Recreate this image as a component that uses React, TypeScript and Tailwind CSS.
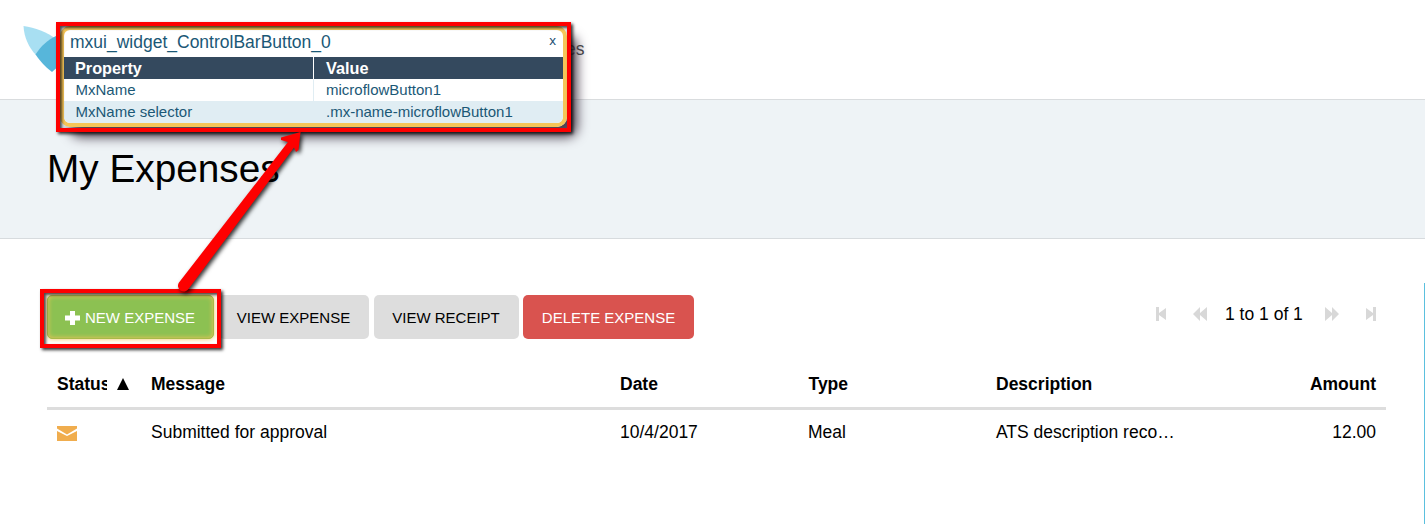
import React from "react";

const COLS = "grid grid-cols-[94px_469px_188px_188px_201px_199px]";

function Logo() {
  return (
    <svg className="ml-[23px] mt-[26px] shrink-0" width="66" height="47" viewBox="0 0 66 47">
      <path d="M0.500 0C12 1.500 24 6 33 13L38 30L13 29C6 22 1 11 0.500 0Z" fill="#a8dff2" />
      <path d="M12.500 28.500C18 20 25 13.500 33 10L47 30L29 46C22 41 17 35 12.500 28.500Z" fill="#57b6da" />
    </svg>
  );
}

function Button({ className, children }: { className: string; children: React.ReactNode }) {
  return (
    <button className={`flex h-[44px] items-center justify-center rounded-[5px] pt-[2px] text-[15px] whitespace-nowrap ${className}`}>
      {children}
    </button>
  );
}

function PagerIcon({ d, width, className }: { d: string; width: number; className: string }) {
  return (
    <svg className={`shrink-0 ${className}`} width={width} height="14" viewBox={`0 0 ${width} 14`} fill="#d8d8d8">
      <path d={d} />
    </svg>
  );
}

function Inspector() {
  return (
    <div className="absolute left-[60px] top-[26px] h-[101px] w-[507px] overflow-hidden rounded-[10px] border-4 border-[#f5c558] bg-white text-[15px] text-[#1b5876]">
      <div className="flex h-[27px] items-start justify-between px-[6px] text-[17.500px] leading-[20px]">
        <span className="pt-[2px]">mxui_widget_ControlBarButton_0</span>
        <span className="pr-px pt-px text-[13.500px] text-[#1b4f72]">x</span>
      </div>
      <div className="grid h-[22px] grid-cols-[250px_249px] bg-[#34495e] text-[16.250px] font-bold leading-[22px] text-white">
        <div className="border-r border-white pl-[11px]">Property</div>
        <div className="pl-[12px]">Value</div>
      </div>
      <div className="grid h-[22px] grid-cols-[250px_249px] leading-[22px]">
        <div className="border-r border-[#e0edf3] pl-[11.500px]">MxName</div>
        <div className="pl-[12px]">microflowButton1</div>
      </div>
      <div className="grid h-[22px] grid-cols-[250px_249px] bg-[#e0edf3] leading-[22px]">
        <div className="pl-[11.500px]">MxName selector</div>
        <div className="pl-[12px]">.mx-name-microflowButton1</div>
      </div>
    </div>
  );
}

export default function App() {
  return (
    <div className="relative flex h-[524px] w-[1425px] flex-col overflow-hidden bg-white font-['Liberation_Sans',Arial,sans-serif] text-[17.500px] text-black">
      <header className="flex h-[100px] items-start border-b border-[#d9dcde]">
        <Logo />
        <span className="ml-[477px] mt-[38px] leading-[22px] text-[#444]">es</span>
      </header>

      <section className="h-[139px] border-b border-[#d7dbde] bg-[#eef3f6] pl-[47px] pt-[47px]">
        <h1 className="text-[38.750px] leading-[44px]">My Expenses</h1>
      </section>

      <main className="flex grow flex-col pl-[47px] pt-[56px]">
        <div className="flex h-[44px]">
          <Button className="w-[167px] gap-[5px] border border-[#a9b948] bg-[#8cc152] pr-px text-white shadow-[inset_0_0_5px_#f5c558,0_0_5px_#f5c558]">
            <svg className="-mt-px" width="15" height="14" viewBox="0 0 15 14" fill="currentColor">
              <path d="M5 0h5v4.500h5v5h-5V14H5V9.500H0v-5h5z" />
            </svg>
            NEW EXPENSE
          </Button>
          <Button className="ml-[5px] w-[150px] bg-[#ddd] pr-px">VIEW EXPENSE</Button>
          <Button className="ml-[5px] w-[145px] bg-[#ddd] pr-px">VIEW RECEIPT</Button>
          <Button className="ml-[4px] w-[171px] bg-[#d9534f] text-white">DELETE EXPENSE</Button>
          <nav className="ml-auto mr-[49px] flex h-[38px] items-center">
            <PagerIcon width={10} className="mr-[27px]" d="M0 0h3v6L10 1v12L3 8v6H0z" />
            <PagerIcon width={14} className="mr-[18px]" d="M0 7L7 0v6l7-6v14L7 8v6z" />
            <span className="w-[77px] whitespace-nowrap">1 to 1 of 1</span>
            <PagerIcon width={14} className="ml-[23px]" d="M14 7L7 0v6L0 0v14l7-6v6z" />
            <PagerIcon width={10} className="ml-[27px]" d="M10 0H7v6L0 1v12l7-5v6h3z" />
          </nav>
        </div>

        <div className="mt-[22px] w-[1339px]">
          <div className={`${COLS} h-[49px] border-b-[3px] border-[#ddd] font-bold leading-[46px]`}>
            <div className="flex pl-[10px]">
              <span className="w-[50px] overflow-hidden">Status</span>
              <svg className="ml-[10px] mt-[17px]" width="12" height="12" viewBox="0 0 12 12">
                <path d="M6 0l6 12H0z" />
              </svg>
            </div>
            <div className="pl-[10px]">Message</div>
            <div className="pl-[10px]">Date</div>
            <div className="pl-[10.500px]">Type</div>
            <div className="pl-[10px]">Description</div>
            <div className="pr-[10px] text-right">Amount</div>
          </div>
          <div className={`${COLS} h-[45px] leading-[45px]`}>
            <div className="pl-[10px] pt-[16px]">
              <svg width="20" height="15" viewBox="0 0 20 15" fill="#f0ad4e">
                <path d="M0 0h20v2.500L10 8.500L0 2.500z" />
                <path d="M0 5l10 5l10-5v10H0z" />
              </svg>
            </div>
            <div className="pl-[10px]">Submitted for approval</div>
            <div className="pl-[10px]">10/4/2017</div>
            <div className="pl-[10px]">Meal</div>
            <div className="pl-[10px]">ATS description reco…</div>
            <div className="pr-[10px] text-right">12.00</div>
          </div>
        </div>
      </main>

      <div className="absolute left-[1424px] top-[283px] h-[241px] w-px bg-[#5bc0de]" />

      <div className="absolute left-[60px] top-[26px] h-[101px] w-[507px] rounded-[10px] shadow-[10px_10px_12px_#4b3f4e]" />
      <Inspector />
      <div className="absolute left-[56px] top-[22px] h-[110px] w-[515px] border-4 border-[#fe0000] shadow-[2px_2px_3px_rgba(0,0,0,0.8),inset_2px_2px_3px_rgba(0,0,0,0.7)]" />
      <div className="absolute left-[40px] top-[289px] h-[59px] w-[181px] border-4 border-[#fe0000] shadow-[2px_2px_3px_rgba(0,0,0,0.8),inset_2px_2px_3px_rgba(0,0,0,0.7)]" />
      <svg
        className="absolute left-[170px] top-[126px] drop-shadow-[2px_2px_2px_rgba(0,0,0,0.8)]"
        width="140"
        height="172"
        viewBox="0 0 140 172"
        fill="#fe0000"
      >
        <path d="M130.500 6L111 11.500V14L118 16L9 156.500A5.500 5.500 0 0 0 18.500 163L124 21.500L126 26L128.500 24Z" />
      </svg>
    </div>
  );
}
